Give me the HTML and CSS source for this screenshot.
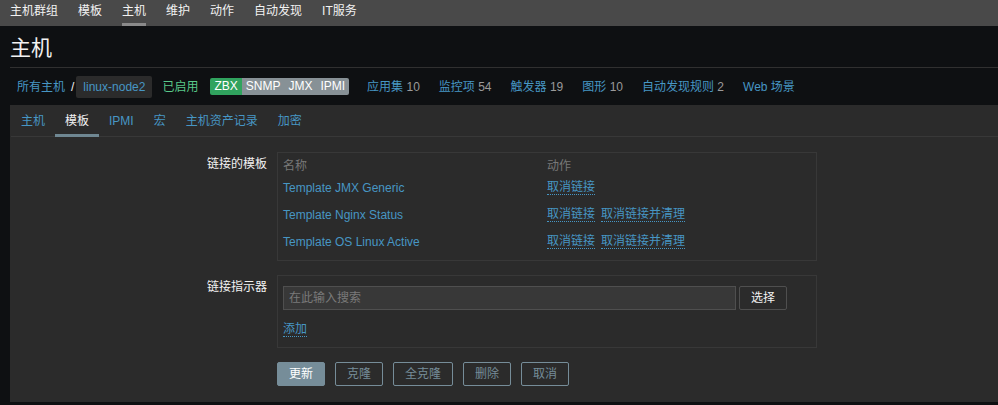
FILE: index.html
```html
<!DOCTYPE html>
<html lang="zh-CN">
<head>
<meta charset="utf-8">
<title>主机</title>
<link rel="stylesheet" href="styles.css">
</head>
<body>
<nav class="topnav">
  <a class="tn">主机群组</a>
  <a class="tn">模板</a>
  <a class="tn active">主机</a>
  <a class="tn">维护</a>
  <a class="tn">动作</a>
  <a class="tn">自动发现</a>
  <a class="tn">IT服务</a>
</nav>
<div class="page">
  <header class="header">
    <h1 class="title">主机</h1>
  </header>
  <div class="crumbs">
    <a class="link">所有主机</a><span class="sep">/</span><span class="crumb-cur">linux-node2</span>
    <span class="status">已启用</span>
    <span class="tags"><span class="tag green">ZBX</span><span class="tag grey">SNMP</span><span class="tag grey">JMX</span><span class="tag grey">IPMI</span></span>
    <span class="ent first"><a class="link">应用集</a> <span class="cnt">10</span></span>
    <span class="ent"><a class="link">监控项</a> <span class="cnt">54</span></span>
    <span class="ent"><a class="link">触发器</a> <span class="cnt">19</span></span>
    <span class="ent"><a class="link">图形</a> <span class="cnt">10</span></span>
    <span class="ent"><a class="link">自动发现规则</a> <span class="cnt">2</span></span>
    <span class="ent"><a class="link">Web 场景</a></span>
  </div>
  <section class="panel">
    <div class="tabs">
      <a class="tab">主机</a>
      <a class="tab active">模板</a>
      <a class="tab">IPMI</a>
      <a class="tab">宏</a>
      <a class="tab">主机资产记录</a>
      <a class="tab">加密</a>
    </div>
    <div class="form">
      <div class="label">链接的模板</div>
      <div class="box box-table">
        <div class="trow thead"><span class="c1">名称</span><span class="c2">动作</span></div>
        <div class="trow"><span class="c1"><a class="link">Template JMX Generic</a></span><span class="c2"><a class="act">取消链接</a></span></div>
        <div class="trow"><span class="c1"><a class="link">Template Nginx Status</a></span><span class="c2"><a class="act">取消链接</a><a class="act">取消链接并清理</a></span></div>
        <div class="trow"><span class="c1"><a class="link">Template OS Linux Active</a></span><span class="c2"><a class="act">取消链接</a><a class="act">取消链接并清理</a></span></div>
      </div>
      <div class="label">链接指示器</div>
      <div class="box box-link">
        <div class="search-row">
          <input class="search" type="text" placeholder="在此输入搜索">
          <button class="btn-grey">选择</button>
        </div>
        <div class="add-row"><a class="act">添加</a></div>
      </div>
      <div></div>
      <div class="buttons">
        <button class="btn primary">更新</button>
        <button class="btn alt">克隆</button>
        <button class="btn alt">全克隆</button>
        <button class="btn alt">删除</button>
        <button class="btn alt">取消</button>
      </div>
    </div>
  </section>
</div>
</body>
</html>
```

FILE: styles.css
```css
* { box-sizing: border-box; }
html, body {
  margin: 0;
  padding: 0;
  height: 405px;
  overflow: hidden;
}
body {
  background: #0e1012;
  color: #f2f2f2;
  font-family: "Liberation Sans", Arial, "Noto Sans CJK SC", sans-serif;
  font-size: 12px;
  line-height: 14px;
}
a { text-decoration: none; cursor: pointer; }

.topnav {
  display: flex;
  gap: 20px;
  height: 26px;
  padding-left: 10px;
  background: #494949;
}
.tn {
  display: block;
  color: #f2f2f2;
  padding: 4px 0 5px;
  line-height: 14px;
  border-bottom: 3px solid transparent;
}
.tn.active { border-bottom-color: #8a8a8a; }

.page { padding-left: 10px; }

.header {
  height: 42px;
  border-bottom: 1px solid #303030;
}
.title {
  margin: 0;
  padding-top: 10px;
  font-size: 21px;
  line-height: 24px;
  font-weight: normal;
  color: #f2f2f2;
}

.crumbs {
  display: flex;
  align-items: center;
  height: 37px;
  padding-left: 7px;
  white-space: nowrap;
}
.link { color: #4796c4; }
.sep { color: #f2f2f2; margin: 0 2px 0 6px; }
.crumb-cur {
  display: inline-block;
  height: 22px;
  line-height: 22px;
  padding: 0 7px;
  background: #2b2b2b;
  color: #4796c4;
  border-radius: 2px;
}
.status { color: #5ac98a; margin-left: 10px; }
.tags { display: flex; margin-left: 12px; }
.tag {
  display: inline-block;
  height: 17px;
  line-height: 17px;
  padding: 0 4px;
  color: #ffffff;
}
.tag.green { background: #30a35e; border-radius: 2px 0 0 2px; }
.tag.grey { background: #879196; }
.tag.grey:last-child { border-radius: 0 2px 2px 0; }
.ent { margin-left: 19px; }
.ent.first { margin-left: 18px; }
.cnt { color: #9a9a9a; }

.panel {
  background: #2b2b2b;
  height: 297px;
  padding-left: 1px;
}
.tabs {
  display: flex;
  border-bottom: 1px solid #383838;
  height: 32px;
}
.tab {
  display: block;
  padding: 9px 10px 6px;
  line-height: 14px;
  color: #4796c4;
  border-bottom: 3px solid transparent;
  height: 32px;
  margin-bottom: -1px;
}
.tab.active { color: #f2f2f2; border-bottom-color: #6f8792; }

.form {
  display: grid;
  grid-template-columns: 256px 540px;
  column-gap: 10px;
  row-gap: 14px;
  padding-top: 15px;
}
.label {
  text-align: right;
  padding-top: 5px;
  color: #f2f2f2;
}
.box {
  border: 1px solid #383838;
  padding: 5px;
}
.box-table { padding: 5px 5px 5px 5px; height: 109px; }
.trow {
  display: flex;
  height: 27px;
  align-items: center;
}
.trow.thead { height: 16px; }
.thead .c1, .thead .c2 { color: #787878; }
.c1 { width: 264px; flex: none; }
.c2 { display: flex; gap: 6px; }
.act {
  display: inline-block;
  color: #4796c4;
  line-height: 14px;
  border-bottom: 1px dotted #4796c4;
}

.box-link { padding: 10px 5px 11px; height: 73px; }
.search-row { display: flex; gap: 3px; }
.search {
  width: 453px;
  height: 24px;
  margin: 0;
  padding: 0 5px;
  background: #383838;
  border: 1px solid #4f4f4f;
  color: #f2f2f2;
  font: inherit;
  outline: none;
}
.search::placeholder { color: #7a7a7a; }
.btn-grey {
  width: 48px;
  height: 24px;
  margin: 0;
  padding: 0;
  background: #2b2b2b;
  border: 1px solid #4f4f4f;
  border-radius: 2px;
  color: #f2f2f2;
  font: inherit;
}
.add-row { margin-top: 12px; }

.buttons { display: flex; gap: 10px; }
.btn {
  height: 24px;
  margin: 0;
  padding: 0 11px;
  min-width: 48px;
  border: 1px solid #768d99;
  border-radius: 2px;
  font: inherit;
  line-height: 22px;
}
.btn.primary { background: #768d99; color: #ffffff; }
.btn.alt { background: transparent; color: #768d99; }
```
